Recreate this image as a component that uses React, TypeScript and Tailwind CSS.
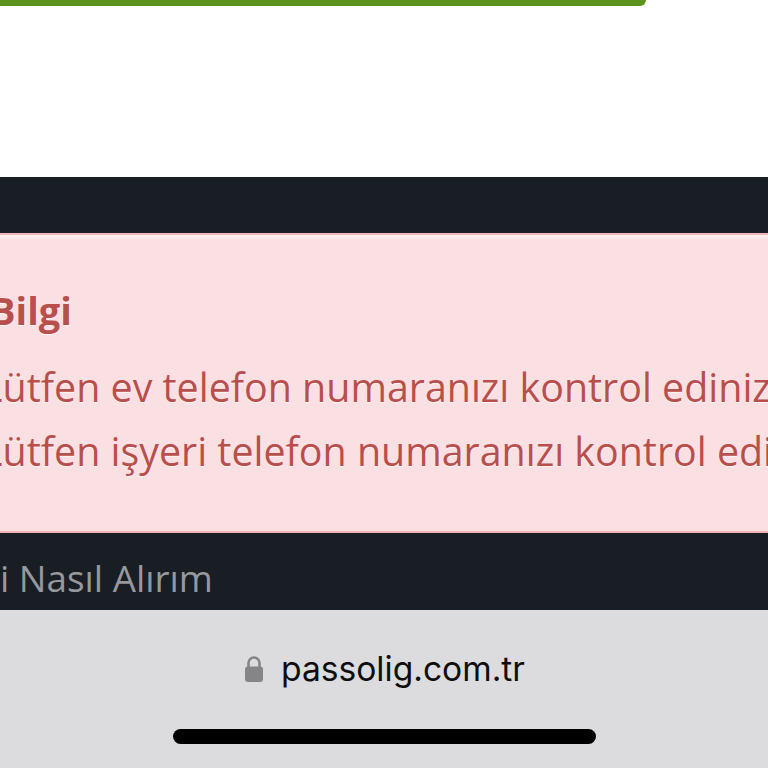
import React from 'react';

const App: React.FC = () => {
  return (
    <div className="flex h-[768px] w-[768px] flex-col overflow-hidden bg-white font-['Open_Sans',sans-serif]">
      {/* top of the green button */}
      <div className="h-[6px] w-[646px] shrink-0 rounded-br-[10px] bg-[#5c931e]"></div>
      <div className="h-[171px] shrink-0 bg-white"></div>

      <div className="h-[56px] shrink-0 bg-[#191d24]"></div>

      {/* alert box */}
      <div className="h-[300px] shrink-0 overflow-hidden whitespace-nowrap border-y-2 border-[#eeb4b7] bg-[#fae0e2] text-[#b84f4d] shadow-[inset_0_3px_0_rgba(255,255,255,0.35)] [text-shadow:0_1px_1px_rgba(255,255,255,0.7)]">
        <h4 className="-ml-[10px] mt-[49px] text-[38px] font-bold leading-[52px]">Bilgi</h4>
        <p className="-ml-[18px] mt-[30px] text-[39.4px] leading-[42px]">Lütfen ev telefon numaranızı kontrol ediniz</p>
        <p className="-ml-[18px] mt-[22px] text-[39.4px] leading-[42px]">Lütfen işyeri telefon numaranızı kontrol ediniz</p>
      </div>

      <div className="flex h-[77px] shrink-0 items-center overflow-hidden whitespace-nowrap bg-[#191d24] pt-[14px] text-[36.8px] text-[#96989b]">
        <span>i Nasıl Alırım</span>
      </div>

      {/* safari address bar */}
      <div className="flex flex-1 flex-col items-center bg-[#dcdcde] font-['Inter',sans-serif]">
        <div className="ml-[1px] mt-[39px] flex items-center gap-[17px]">
          <svg width="20" height="28" viewBox="0 0 20 28" fill="none">
            <path d="M4.5 13V8a5.5 5.5 0 0 1 11 0v5" stroke="#858587" strokeWidth="2.6" />
            <rect x="1" y="11.5" width="18" height="15.5" rx="3" fill="#858587" />
          </svg>
          <span className="text-[33.6px] leading-[40px] text-[#0e0e10]">passolig.com.tr</span>
        </div>
        <div className="ml-[1px] mt-[40px] h-[15px] w-[423px] rounded-full bg-black"></div>
      </div>
    </div>
  );
};

export default App;
